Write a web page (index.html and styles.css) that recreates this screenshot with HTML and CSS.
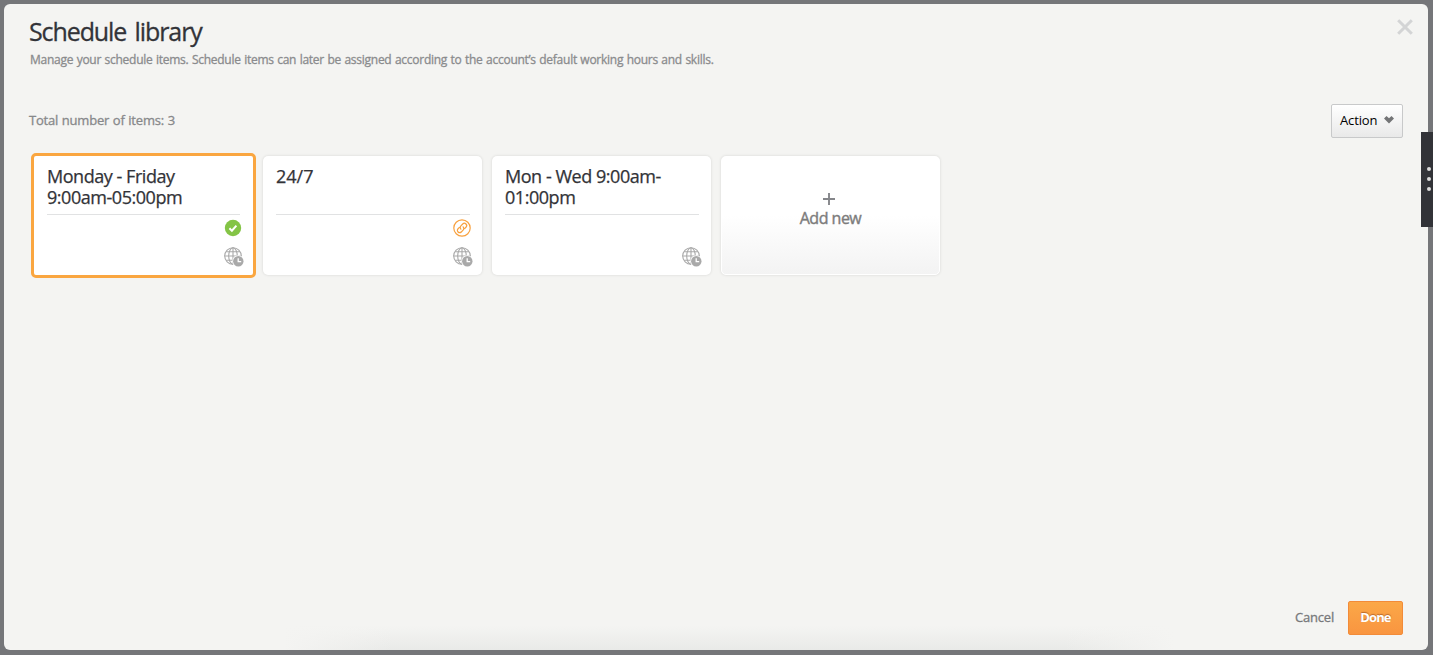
FILE: index.html
```html
<!DOCTYPE html>
<html lang="en">
<head>
<meta charset="utf-8">
<title>Schedule library</title>
<link rel="stylesheet" href="styles.css">
</head>
<body>
<svg width="0" height="0" class="defs">
  <symbol id="globe-clock" viewBox="0 0 20 20">
    <g fill="none" stroke="#a9a9a9" stroke-width="1.1">
      <circle cx="9" cy="9" r="8.3"/>
      <ellipse cx="9" cy="9" rx="4.3" ry="8.3"/>
      <path d="M9 .7v16.6M.7 9h16.6M2.2 4.8h13.6M2.2 13.2h13.6"/>
    </g>
    <circle cx="14.3" cy="14.2" r="6" fill="#fff"/>
    <circle cx="14.3" cy="14.2" r="5.2" fill="#a9a9a9"/>
    <path d="M14.2 11.2v3.4h3" fill="none" stroke="#fff" stroke-width="1.3"/>
  </symbol>
</svg>
<main class="dialog">
  <header class="head">
    <div>
      <h1 class="title">Schedule library</h1>
      <p class="subtitle">Manage your schedule items. Schedule items can later be assigned according to the account’s default working hours and skills.</p>
    </div>
    <svg class="close" width="16" height="16" viewBox="0 0 16 16"><path d="M1.2 1.2l13.6 13.6M14.8 1.2L1.2 14.8" stroke="#d3d4d5" stroke-width="3"/></svg>
  </header>
  <div class="toolbar">
    <span class="total">Total number of items: 3</span>
    <button class="action"><span>Action</span><svg width="10" height="8" viewBox="0 0 10 8"><path d="M0 2.5L2.5 0 5 2.3 7.5 0 10 2.5 5 7.6z" fill="#747577"/></svg></button>
  </div>
  <section class="cards">
    <article class="card selected">
      <h2 class="name"><span>Monday - Friday</span><span>9:00am-05:00pm</span></h2>
      <div class="marks">
        <svg width="18" height="18" viewBox="0 0 18 18"><circle cx="9" cy="9" r="8.2" fill="#84c446"/><path d="M5.4 9.3l2.5 2.4 4.5-5" fill="none" stroke="#fff" stroke-width="2"/></svg>
        <svg class="globe" width="20" height="20"><use href="#globe-clock"/></svg>
      </div>
    </article>
    <article class="card">
      <h2 class="name"><span class="wide">24/7</span></h2>
      <div class="marks">
        <svg width="18" height="18" viewBox="0 0 18 18"><g fill="none" stroke="#f8a13f" stroke-width="1.2"><circle cx="9" cy="9" r="8.2"/><g transform="rotate(-45 9 9)"><path d="M8 6.7H5.7a2.3 2.3 0 0 0 0 4.6h2.6a2.3 2.3 0 0 0 2.2-2.8M10 11.3h2.3a2.3 2.3 0 0 0 0-4.6H9.7a2.3 2.3 0 0 0-2.2 2.8"/></g></g></svg>
        <svg class="globe" width="20" height="20"><use href="#globe-clock"/></svg>
      </div>
    </article>
    <article class="card">
      <h2 class="name"><span>Mon - Wed 9:00am-</span><span>01:00pm</span></h2>
      <div class="marks">
        <svg class="globe" width="20" height="20"><use href="#globe-clock"/></svg>
      </div>
    </article>
    <article class="card add">
      <svg width="12" height="12" viewBox="0 0 12 12"><path d="M6 0v12M0 6h12" stroke="#85868a" stroke-width="1.9"/></svg>
      <span class="addnew">Add new</span>
    </article>
  </section>
  <footer class="foot">
    <span class="cancel">Cancel</span>
    <button class="done"><span>Done</span></button>
  </footer>
</main>
<aside class="handle"><i></i><i></i><i></i></aside>
</body>
</html>
```
FILE: styles.css
```css
* { box-sizing: border-box; }
body {
  margin: 0;
  height: 655px;
  padding: 4px 5px 5px 4px;
  background: #757679;
  font-family: "Open Sans", "Noto Sans", sans-serif;
  overflow: hidden;
}
.defs { position: absolute; }
h1, h2, p { margin: 0; font-weight: 400; white-space: nowrap; }
button { font-family: inherit; white-space: nowrap; }
.dialog {
  width: 1424px;
  height: 646px;
  padding: 0 25px 15px;
  border-radius: 6px;
  background:
    linear-gradient(90deg, #f4f4f2 280px, rgba(244, 244, 242, 0) 390px, rgba(244, 244, 242, 0) 1060px, #f4f4f2 1170px) 0 100% / 100% 24px no-repeat,
    linear-gradient(#f4f4f2, #e9eae8) 0 100% / 100% 24px no-repeat,
    #f4f4f2;
  display: flex;
  flex-direction: column;
}
.head { display: flex; justify-content: space-between; height: 100px; padding-top: 10px; }
.title { height: 34px; font-size: 25px; line-height: 35px; color: #323338; letter-spacing: -1.1px; word-spacing: 3px; -webkit-text-stroke: 0.3px; }
.subtitle { margin: 4px 0 0 1px; font-size: 12px; line-height: 16px; color: #8a8b8d; letter-spacing: -0.26px; word-spacing: 0.6px; -webkit-text-stroke: 0.3px; }
.close { margin: 5px -10px 0 0; }
.toolbar { display: flex; justify-content: space-between; height: 34px; align-items: center; }
.total { margin-top: -2px; font-size: 13px; line-height: 16px; color: #87888a; letter-spacing: -0.2px; word-spacing: 0.5px; -webkit-text-stroke: 0.3px; }
.action {
  width: 72px;
  height: 34px;
  padding: 0 8px 2px;
  display: flex;
  align-items: center;
  justify-content: space-between;
  border: 1px solid #c8c9ca;
  border-radius: 2px;
  background: linear-gradient(#fff, #e9e9e9);
  font-size: 13px;
  letter-spacing: -0.15px;
  color: #000;
}
.cards { display: flex; gap: 10px; margin: 15px 0 0 2px; height: 125px; }
.card {
  width: 219px;
  height: 119px;
  margin-top: 3px;
  padding: 10px 12px 0 13px;
  border-radius: 5px;
  background: #fff;
  box-shadow: 0 0 3px rgba(0, 0, 0, .13);
}
.card.selected { width: 225px; height: 125px; margin: 0 -3px 0 0; padding: 10px 13px; border: 3px solid #faa640; box-shadow: none; }
.name {
  height: 49px;
  border-bottom: 1px solid #e1e2e3;
  font-size: 18px;
  line-height: 21px;
  color: #323338;
  letter-spacing: -0.46px;
  -webkit-text-stroke: 0.25px;
}
.name span { display: block; }
.name .wide { letter-spacing: 0; }
.marks { display: flex; flex-direction: column; align-items: flex-end; height: 52px; padding-top: 4px; margin-right: -1px; }
.selected .marks { margin-right: -2px; }
.globe { margin: auto -2px 0 0; }
.card.add {
  display: flex;
  flex-direction: column;
  align-items: center;
  padding: 36px 0 0;
  border: 1px solid #fff;
  background: linear-gradient(#fff 50%, #f3f3f3);
}
.card.add svg { margin-left: -3px; }
.addnew { font-size: 16px; line-height: 20px; margin-top: 3px; color: #7c7c7c; letter-spacing: -0.5px; white-space: nowrap; -webkit-text-stroke: 0.4px; }
.foot { display: flex; justify-content: flex-end; align-items: center; gap: 14px; margin-top: auto; font-size: 13px; }
.cancel { margin-top: -2px; color: #77787b; letter-spacing: -0.2px; -webkit-text-stroke: 0.3px; }
.done {
  width: 55px;
  height: 34px;
  padding: 0 0 2px;
  border: 1px solid #f28b39;
  border-radius: 2px;
  background: linear-gradient(#fba848, #f99540);
  font-size: 13px;
  font-weight: 700;
  letter-spacing: -0.9px;
  color: #fff;
  text-shadow: 0 -1px 1px #b8682c;
}
.handle {
  position: absolute;
  right: 0;
  top: 132px;
  width: 12px;
  height: 95px;
  padding: 0 0 1px 6px;
  display: flex;
  flex-direction: column;
  justify-content: center;
  gap: 6px;
  background: #323338;
}
.handle i { width: 4px; height: 4px; border-radius: 50%; background: #dcdcdc; }
```
